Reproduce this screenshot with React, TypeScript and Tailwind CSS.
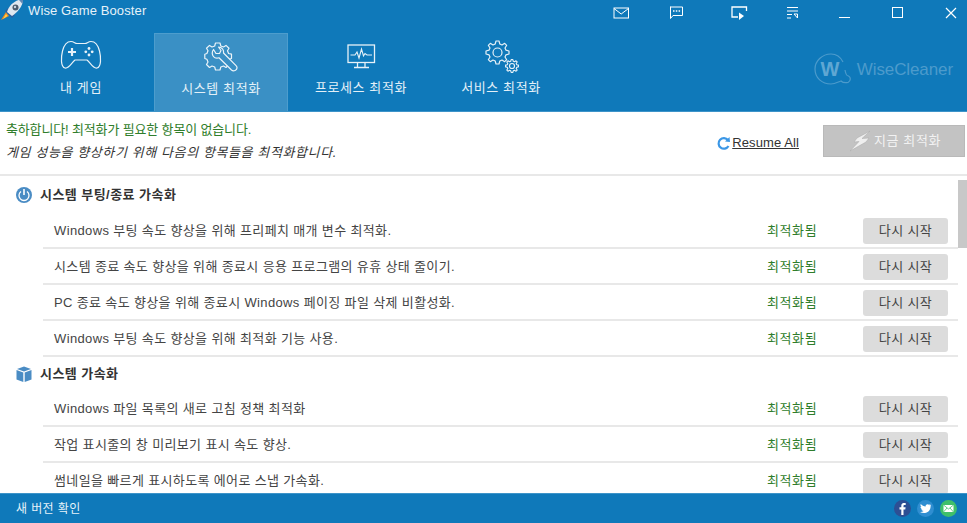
import type { ReactNode } from "react"

const KR = "font-['Liberation_Sans','Noto_Sans_CJK_KR',sans-serif]"

const Rocket = () => (
    <svg width="26" height="22" viewBox="0 0 26 22" className="block">
        <path d="M1 21 L6 13 L9 17 Z" fill="#f08a1d" />
        <path d="M3 20 L6 15 L7.500 17 Z" fill="#ffd34d" />
        <path d="M5 12 L8 9 L15 16 L12 19 Z" fill="#2b5f9e" />
        <path d="M7 13 C9 6 15 1 23 0 C23 7 18 13 12 17 Z" fill="#dfe7ef" />
        <path d="M19 1 C21 0.500 22 0.500 23 0 C23 2 23 3 22.500 5 Z" fill="#5f87b5" />
        <circle cx="15.500" cy="8.500" r="3" fill="#4b5a6b" />
        <circle cx="15" cy="8" r="1.200" fill="#c6d4e2" />
    </svg>
)

const WindowIcons = () => (
    <div className="flex-1 relative h-full">
        <svg width="17" height="12" viewBox="0 0 17 12" fill="none" stroke="#fff" className="absolute left-[346px] top-[7px]">
            <rect x="1" y="1" width="14.500" height="10" />
            <path d="M1 1.500 L8.200 7 L15.500 1.500" />
        </svg>
        <svg width="15" height="14" viewBox="0 0 15 14" fill="none" stroke="#fff" className="absolute left-[402px] top-[6px]">
            <path d="M1 1 H13.500 V9.500 H4 L1.500 12.500 V1 Z" />
            <path d="M4 5 H5.500 M6.800 5 H8.300 M9.600 5 H11.100" strokeWidth="1.500" />
        </svg>
        <svg width="17" height="15" viewBox="0 0 17 15" fill="none" stroke="#fff" className="absolute left-[464px] top-[6px]">
            <path d="M7 11 H1 V1 H15.500 V5" strokeWidth="1.300" />
            <path d="M8 6.500 L13 10 L8 14 Z" fill="#fff" stroke="none" />
        </svg>
        <svg width="13" height="14" viewBox="0 0 13 14" fill="none" stroke="#fff" className="absolute left-[519px] top-[6px]">
            <path d="M1 1.500 H12 M1 5 H12 M1 8.500 H6 M1 12 H5" />
            <path d="M8 8 L11.500 8 L11.500 12 M8 8 L11.500 12" />
        </svg>
        <div className="absolute left-[572px] top-[17px] w-[11px] h-px bg-white" />
        <div className="absolute left-[625px] top-[7px] w-[11px] h-[11px] border border-white" />
        <svg width="12" height="12" viewBox="0 0 12 12" fill="none" stroke="#fff" strokeWidth="1.200" className="absolute left-[678px] top-[7px]">
            <path d="M1 1 L11 11 M11 1 L1 11" />
        </svg>
    </div>
)

const tabIconProps = { fill: "none", stroke: "#fff" }

const GameIcon = () => (
    <svg width="42" height="30" viewBox="0 0 42 30" {...tabIconProps} strokeWidth="1.200" className="block opacity-90 mb-[3px]">
        <path d="M11 1.500 C14 1.500 15 3.500 17 3.500 H25 C27 3.500 28 1.500 31 1.500 C36 1.500 38 5 39.500 11 C41 17 41.500 27 37 28 C33 29 30 22 27 20 H15 C12 22 9 29 5 28 C0.500 27 1 17 2.500 11 C4 5 6 1.500 11 1.500 Z" />
        <path d="M12 8 V16 M8 12 H16" strokeWidth="2.200" />
        <circle cx="29" cy="8.500" r="1.400" fill="#fff" stroke="none" />
        <circle cx="29" cy="15" r="1.400" fill="#fff" stroke="none" />
        <circle cx="25.800" cy="11.800" r="1.400" fill="#fff" stroke="none" />
        <circle cx="32.200" cy="11.800" r="1.400" fill="#fff" stroke="none" />
    </svg>
)

const toolsGear = "M11.500 1 H16 L16.800 4 L19.500 5 L22 3.400 L25 6.200 L23.500 8.800 L24.600 11.500 L27.500 12.200 V16.500 L24.600 17.300 L23.500 20 L25 22.500 L22 25.500 L19.500 24 L16.800 25 L16 28 H11.500 L10.700 25 L8 24 L5.500 25.500 L2.500 22.500 L4 20 L2.900 17.300 L0.800 16.500 V12.200 L2.900 11.500 L4 8.800 L2.500 6.200 L5.500 3.400 L8 5 L10.700 4 Z"

const ToolsIcon = () => (
    <svg width="34" height="30" viewBox="0 0 34 30" {...tabIconProps} strokeWidth="1.200" strokeLinejoin="round" className="block opacity-90 mb-[2px]">
        <path d={toolsGear} />
        <path d="M9.500 7.500 C7.500 10 8 14 10.500 15.500 C12 16.300 13.500 16.300 15 15.800 L27.500 28 C29.500 29.800 33.300 28.300 33 25.500 C33 24.700 32.500 24 31.800 23.300 L19.500 11 C20 8 18 5 14.500 5 L17 8.500 L15.500 11.500 L12 11.500 Z" fill="#3a90c5" />
    </svg>
)

const MonitorIcon = () => (
    <svg width="29" height="25" viewBox="0 0 29 25" {...tabIconProps} strokeWidth="1.300" className="block opacity-90 mb-[4px]">
        <rect x="1" y="1" width="26.500" height="17.500" />
        <path d="M3.500 11 H8 L10 8 L12 14 L14.500 5 L16.500 12 L18 9.500 L20 11 H25" strokeWidth="1.100" />
        <path d="M10.500 19 V23 M18 19 V23 M7 23.500 H22" />
    </svg>
)

const gear = "M11 1 L14 1 L14.800 4 L17 5 L19.700 3.300 L21.700 5.300 L20 8 L21 10.200 L24 11 L24 14 L21 14.800 L20 17 L21.700 19.700 L19.700 21.700 L17 20 L14.800 21 L14 24 L11 24 L10.200 21 L8 20 L5.300 21.700 L3.300 19.700 L5 17 L4 14.800 L1 14 L1 11 L4 10.200 L5 8 L3.300 5.300 L5.300 3.300 L8 5 L10.200 4 Z"

const GearsIcon = () => (
    <svg width="36" height="33" viewBox="0 0 36 33" {...tabIconProps} strokeWidth="1.200" className="block opacity-90 ml-[3px]">
        <path d={gear} strokeLinejoin="round" />
        <circle cx="12.500" cy="12.500" r="4.500" />
        <g transform="translate(20 19) scale(0.560)">
            <path d={gear} strokeWidth="2" strokeLinejoin="round" />
            <circle cx="12.500" cy="12.500" r="4.500" strokeWidth="2" />
        </g>
    </svg>
)

const tabs: { label: string, icon: ReactNode, active?: boolean }[] = [
    { label: "내 게임", icon: <GameIcon /> },
    { label: "시스템 최적화", icon: <ToolsIcon />, active: true },
    { label: "프로세스 최적화", icon: <MonitorIcon /> },
    { label: "서비스 최적화", icon: <GearsIcon /> },
]

const WiseLogo = () => (
    <div className="flex items-center gap-[5px] text-[#4c9bcc]">
        <svg width="38" height="33" viewBox="0 0 38 33" fill="none" stroke="#4c9bcc" strokeWidth="1.200" className="block">
            <path d="M29 9 C26 3 22 1 17 1 C8 1 1 8 1 16 C1 25 8 31 17 31 C21 31 24 29 27 28 C29 30 31 30 34 29.500 C37 28 37 24 34.500 23 C32 23 31.500 20 31 17" />
            <text x="16" y="23" textAnchor="middle" fontSize="20" fontWeight="bold" fontFamily="Liberation Sans" fill="#5fa7d3" stroke="none">W</text>
        </svg>
        <span className="font-['Liberation_Sans',sans-serif] text-[17px] tracking-[-0.1px]">WiseCleaner</span>
    </div>
)

const PowerIcon = () => (
    <svg width="16" height="16" viewBox="0 0 16 16" className="block">
        <circle cx="8" cy="8" r="8" fill="#4a8cc4" />
        <path d="M5 4.500 A5 5 0 1 0 11 4.500" fill="none" stroke="#fff" strokeWidth="1.300" />
        <path d="M8 2 V8" stroke="#fff" strokeWidth="1.600" />
    </svg>
)

const BoxIcon = () => (
    <svg width="16" height="16" viewBox="0 0 16 16" className="block">
        <path d="M8 0.500 L15 3 L8 5.500 L1 3 Z" fill="#4a8cc4" />
        <path d="M0.500 4 L7.300 6.500 V16 L0.500 13.500 Z" fill="#4a8cc4" />
        <path d="M15.500 4 L8.700 6.500 V16 L15.500 13.500 Z" fill="#4a8cc4" />
    </svg>
)

const sections = [
    {
        title: "시스템 부팅/종료 가속화",
        icon: <PowerIcon />,
        height: "h-[37px] pt-[1px]",
        items: [
            "Windows 부팅 속도 향상을 위해 프리페치 매개 변수 최적화.",
            "시스템 종료 속도 향상을 위해 종료시 응용 프로그램의 유휴 상태 줄이기.",
            "PC 종료 속도 향상을 위해 종료시 Windows 페이징 파일 삭제 비활성화.",
            "Windows 부팅 속도 향상을 위해 최적화 기능 사용.",
        ],
    },
    {
        title: "시스템 가속화",
        icon: <BoxIcon />,
        height: "h-[34px]",
        items: [
            "Windows 파일 목록의 새로 고침 정책 최적화",
            "작업 표시줄의 창 미리보기 표시 속도 향상.",
            "썸네일을 빠르게 표시하도록 에어로 스냅 가속화.",
        ],
    },
]

const App = () => {
    return (
        <div className={`w-[967px] h-[523px] flex flex-col overflow-hidden bg-white ${KR}`}>
            <div className="h-[112px] shrink-0 bg-[#0f79ba] border-b border-b-[#3d94c9] flex flex-col">
                <div className="h-[33px] flex">
                    <div className="w-[267px] flex items-start text-white">
                        <div className="mt-[-1px]"><Rocket /></div>
                        <span className="ml-[2px] mt-[2px] text-[13px] leading-[18px] tracking-[0.12px] text-[#e6f2f9]">Wise Game Booster</span>
                    </div>
                    <WindowIcons />
                </div>
                <div className="flex-1 flex items-stretch pl-[14px] gap-[6px]">
                    {tabs.map((tab) => (
                        <div
                            key={tab.label}
                            className={`w-[134px] flex flex-col items-center ${tab.active ? "bg-[#3a90c5] border border-[#4d9dcd] border-b-0" : ""}`}
                        >
                            <div className="h-[40px] flex items-end justify-center">{tab.icon}</div>
                            <span className="mt-[6px] text-[13px] leading-[18px] tracking-[0.6px] text-[#e3f0f8]">{tab.label}</span>
                        </div>
                    ))}
                    <div className="ml-auto mr-[14px] mt-[20px] self-start"><WiseLogo /></div>
                </div>
            </div>

            <div className="h-[64px] shrink-0 border-b-2 border-b-[#e8e8e8] flex">
                <div className="flex-1 pl-[6px] pt-[9px] text-[13px] leading-[18px]">
                    <div className="text-[#2f7d2b] tracking-[-0.15px]">축하합니다! 최적화가 필요한 항목이 없습니다.</div>
                    <div className="mt-[5px] italic tracking-[0.6px] text-[#333333]">게임 성능을 향상하기 위해 다음의 항목들을 최적화합니다.</div>
                </div>
                <div className="flex items-start">
                    <div className="flex items-center mt-[23px] mr-[24px]">
                        <svg width="15" height="15" viewBox="0 0 15 15" fill="none" className="block">
                            <path d="M12 4 A5.300 5.300 0 1 0 12.500 10" stroke="#3b97e6" strokeWidth="2.200" />
                            <path d="M9 5.500 L14 6 L13.500 1 Z" fill="#3b97e6" />
                        </svg>
                        <span className="ml-[1px] text-[13px] leading-[16px] tracking-[0.1px] underline text-[#333333]">Resume All</span>
                    </div>
                    <div className="mt-[13px] mr-[2px] w-[142px] h-[32px] bg-[#c3c3c3] border border-[#b9b9b9] flex items-center justify-center pl-[2px] text-[13px] tracking-[0.6px] text-[#f2f2f2]">
                        <svg width="22" height="22" viewBox="0 0 22 22" className="block mr-[3px]">
                            <path d="M21 1 L8 8 L5 12 L10 11.500 L1 21 L17 12 L20 8 L13 8.500 Z" fill="#efefef" stroke="#a8a8a8" strokeWidth="0.500" />
                        </svg>
                        지금 최적화
                    </div>
                </div>
            </div>

            <div className="flex-1 min-h-0 flex overflow-hidden">
                <div className="flex-1 overflow-hidden">
                    {sections.map((section) => (
                        <div key={section.title}>
                            <div className={`${section.height} pl-[16px] flex items-center`}>
                                {section.icon}
                                <span className="ml-[8px] text-[13px] font-bold text-[#333333] tracking-[0.45px]">{section.title}</span>
                            </div>
                            <div className="ml-[43px]">
                                {section.items.map((item) => (
                                    <div key={item} className="h-[36px] pt-[2px] border-b-2 border-b-[#e8e8e8] flex items-center pl-[11px]">
                                        <span className="flex-1 text-[13px] tracking-[0.36px] text-[#444444]">{item}</span>
                                        <span className="w-[96px] text-[13px] tracking-[0.6px] text-[#2f7d2b]">최적화됨</span>
                                        <div className="w-[85px] h-[26px] mr-[10px] rounded-[3px] bg-[#dcdcdc] flex items-center justify-center text-[13px] tracking-[0.4px] text-[#444444]">다시 시작</div>
                                    </div>
                                ))}
                            </div>
                        </div>
                    ))}
                </div>
                <div className="w-[9px] shrink-0">
                    <div className="mt-[4px] h-[68px] bg-[#c8c8c8]" />
                </div>
            </div>

            <div className="h-[30px] shrink-0 bg-[#0f79ba] border-t border-t-[#3d94c9] flex items-center pl-[16px] pr-[10px]">
                <span className="flex-1 text-[12px] tracking-[0.4px] text-[#e6f2f9]">새 버전 확인</span>
                <div className="flex items-center gap-[6px]">
                    <svg width="17" height="17" viewBox="0 0 17 17" className="block">
                        <circle cx="8.500" cy="8.500" r="8.500" fill="#2d4f94" />
                        <path d="M9.500 15 V9.500 H11.300 L11.600 7.300 H9.500 V6 C9.500 5.300 9.800 5 10.500 5 H11.700 V3 C10 2.800 7.300 2.700 7.300 5.600 V7.300 H5.500 V9.500 H7.300 V15 Z" fill="#fff" />
                    </svg>
                    <svg width="17" height="17" viewBox="0 0 17 17" className="block">
                        <circle cx="8.500" cy="8.500" r="8.500" fill="#2f8ed1" />
                        <path d="M14 5 C13.500 5.300 13 5.400 12.500 5.500 C13 5.200 13.400 4.700 13.600 4.100 C13.100 4.400 12.500 4.600 12 4.700 C10.800 3.500 8.300 4.300 8.700 6.500 C6.800 6.400 5 5.500 3.800 4 C3.200 5.100 3.500 6.400 4.500 7.100 C4.100 7.100 3.700 7 3.400 6.800 C3.400 8 4.200 9 5.400 9.300 C5 9.400 4.600 9.400 4.300 9.300 C4.600 10.300 5.500 11 6.600 11 C5.600 11.800 4.300 12.200 3 12 C8 15 14 11.500 13.600 6 C13.900 5.700 14 5.300 14 5 Z" fill="#fff" />
                    </svg>
                    <svg width="17" height="17" viewBox="0 0 17 17" className="block">
                        <circle cx="8.500" cy="8.500" r="8.500" fill="#3fbf6a" />
                        <rect x="3.500" y="5" width="10" height="7" fill="#fff" />
                        <path d="M3.500 5 L8.500 9 L13.500 5 M3.500 12 L7 8 M13.500 12 L10 8" fill="none" stroke="#3fbf6a" strokeWidth="0.800" />
                    </svg>
                </div>
            </div>
        </div>
    )
}

export default App
